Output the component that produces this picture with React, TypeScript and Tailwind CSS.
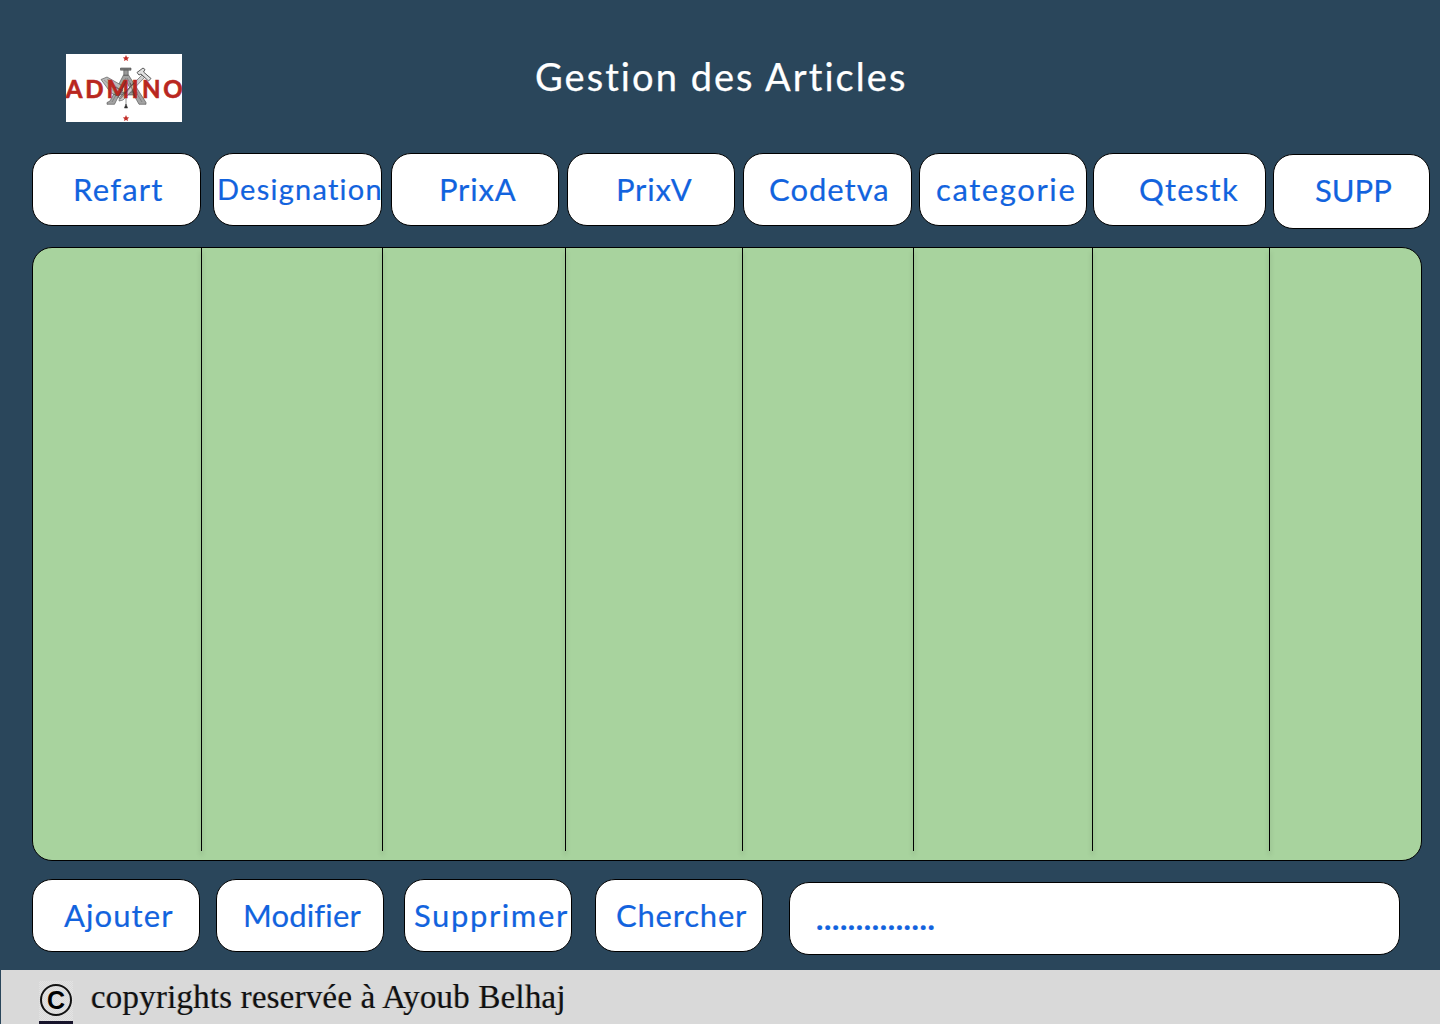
const columns = [
  { label: "Refart", box: "w-[169px] h-[73px] pl-[40px]", text: "text-[31px] tracking-[1.25px]" },
  { label: "Designation", box: "ml-3 w-[169px] h-[73px] pl-[3px] pb-[2px]", text: "text-[29px] tracking-[1.25px]" },
  { label: "PrixA", box: "ml-[9px] w-[168px] h-[73px] pl-[47px]", text: "text-[31px] tracking-[0.8px]" },
  { label: "PrixV", box: "ml-2 w-[168px] h-[73px] pl-[48px]", text: "text-[31px] tracking-[0.8px]" },
  { label: "Codetva", box: "ml-2 w-[169px] h-[73px] pl-[25px]", text: "text-[31px] tracking-[1px]" },
  { label: "categorie", box: "ml-[7px] w-[168px] h-[73px] pl-[16px]", text: "text-[31px] tracking-[1.6px]" },
  { label: "Qtestk", box: "ml-[6px] w-[173px] h-[73px] pl-[45px]", text: "text-[31px] tracking-[1.25px]" },
  { label: "SUPP", box: "ml-[7px] mt-px w-[157px] h-[75px] pl-[41px] pb-[2px]", text: "text-[31px] tracking-[0px]" },
];

const cells = [
  "w-[169px] border-r",
  "w-[181px] border-r",
  "w-[183px] border-r",
  "w-[177px] border-r",
  "w-[171px] border-r",
  "w-[179px] border-r",
  "w-[177px] border-r",
];

const actions = [
  { label: "Ajouter", box: "w-[168px] pl-[31px]", text: "tracking-[1.1px]" },
  { label: "Modifier", box: "ml-4 w-[168px] pl-[26px]", text: "tracking-[0.15px]" },
  { label: "Supprimer", box: "ml-5 w-[168px] pl-[9px]", text: "tracking-[1.6px]" },
  { label: "Chercher", box: "ml-[23px] w-[168px] pl-5", text: "tracking-[0.8px]" },
];

const pill =
  "flex shrink-0 items-center rounded-[20px] border border-black bg-white text-[#1263de] whitespace-nowrap [-webkit-text-stroke:0.2px_#1263de]";

function Logo() {
  return (
    <svg viewBox="0 0 116 68" className="h-[68px] w-[116px] bg-white" aria-label="Admino">
      <g stroke="#4a4a4a" strokeWidth="0.6" strokeLinejoin="round">
        <path d="M57.5 21 H62.5 L80 48.5 V50.3 H73 L60 27 L48.5 50.3 H41 V48.5 L44 47 Z" fill="#a3a3a3" />
        <path d="M60 24 L46 48 M61 24 L76 48" fill="none" stroke="#6b6b6b" />
        <path d="M35 25.5 L41 23 L55 31 L57 36 L52 42 L45 39 Z" fill="#b9b9b9" />
        <path d="M38 26 L50 36 M41 25 L53 35 M43 33 L50 39" fill="none" stroke="#808080" />
        <path d="M54.5 14 h10.5 v2.2 h-10.5 Z" fill="#7d7d7d" />
        <path d="M57.8 16.2 h4.4 v5 h-4.4 Z" fill="#999" />
        <path d="M49 38 h22 v3 h-22 Z" fill="#929292" />
        <path d="M76 21 L78.5 23.5 L57 46 L53 47 L53.5 43.5 Z" fill="#cfcfcf" />
        <path d="M71 18.5 L77 14 L79 15.5 L77.5 18 L85 24.5 L82.5 27 L75 20 L73 21 Z" fill="#e2e2e2" strokeWidth="0.9" />
        <path d="M60 41 V51" fill="none" />
        <path d="M58.4 54 L60 50 L61.6 54 Z" fill="#222" />
      </g>
      <text
        x="-0.2 19.2 40.6 65.6 76 97.3"
        y="43.6"
        fill="#b92720"
        stroke="#b92720"
        strokeWidth="0.6"
        className="font-['Lato'] text-[24px] font-bold"
      >
        ADMINO
      </text>
      <path
        d="M49 33 L57 37 M60 27 L52 44 M64 29 L69 43 M68 29 L54 45"
        fill="none"
        stroke="#42302e"
        strokeWidth="1.3"
        opacity="0.5"
      />
      {[4.3, 64.3].map((y) => (
        <path
          key={y}
          transform={`translate(60 ${y})`}
          d="M0 -3.2 L1 -1 L3.2 -.9 L1.5 .6 L2.1 2.8 L0 1.6 L-2.1 2.8 L-1.5 .6 L-3.2 -.9 L-1 -1 Z"
          fill="#c2302b"
        />
      ))}
    </svg>
  );
}

function CopyrightMark() {
  return (
    <div className="flex h-[43px] w-[34px] flex-col justify-between bg-[conic-gradient(#e3e3e3_25%,#d9d9d9_0_50%,#e3e3e3_0_75%,#d9d9d9_0)] bg-[length:2px_2px]">
      <div className="mt-[3px] ml-px flex size-8 items-center justify-center rounded-full border-2 border-[#111] font-['Liberation_Sans',sans-serif] text-[25px] leading-none font-bold text-black">
        C
      </div>
      <div className="h-[3px] bg-[#17142b]" />
    </div>
  );
}

export default function App() {
  return (
    <div className="flex h-[1024px] w-[1440px] flex-col overflow-hidden bg-[#2a465b] font-['Lato',sans-serif]">
      <header className="flex h-[153px] shrink-0 items-start pl-[66px]">
        <div className="mt-[54px]">
          <Logo />
        </div>
        <h1 className="mt-[50px] ml-[353px] text-[38px] leading-[52px] tracking-[2.05px] whitespace-nowrap text-white [-webkit-text-stroke:0.25px_#fff]">
          Gestion des Articles
        </h1>
      </header>

      <div className="flex h-[94px] shrink-0 items-start pl-8">
        {columns.map((c) => (
          <div key={c.label} className={`${pill} ${c.box}`}>
            <span className={c.text}>{c.label}</span>
          </div>
        ))}
      </div>

      <main className="ml-8 flex h-[614px] w-[1390px] shrink-0 overflow-hidden rounded-[20px] border border-black bg-[#a8d39e]">
        {cells.map((c, i) => (
          <div key={i} className={`h-[603px] shrink-0 border-black drop-shadow-[0_4px_2px_rgba(0,0,0,0.25)] ${c}`} />
        ))}
      </main>

      <div className="flex h-[109px] shrink-0 items-start pt-[18px] pl-8">
        {actions.map((a) => (
          <button key={a.label} className={`${pill} h-[73px] text-[31px] ${a.box}`}>
            <span className={a.text}>{a.label}</span>
          </button>
        ))}
        <div className={`${pill} mt-[3px] ml-[26px] h-[73px] w-[611px] pl-[26px] text-[31px]`}>
          <span className="font-bold tracking-[0.6px]">...............</span>
        </div>
      </div>

      <footer className="ml-px flex flex-1 items-start bg-[#d9d9d9] pl-[38px]">
        <div className="mt-[11px]">
          <CopyrightMark />
        </div>
        <p className="mt-[7px] ml-[18px] font-['Liberation_Serif',serif] text-[33px] leading-[40px] tracking-[0.2px] whitespace-nowrap text-[#111] [text-shadow:-1px_0_0_rgba(0,0,0,0.25)]">
          copyrights reservée à Ayoub Belhaj
        </p>
      </footer>
    </div>
  );
}
